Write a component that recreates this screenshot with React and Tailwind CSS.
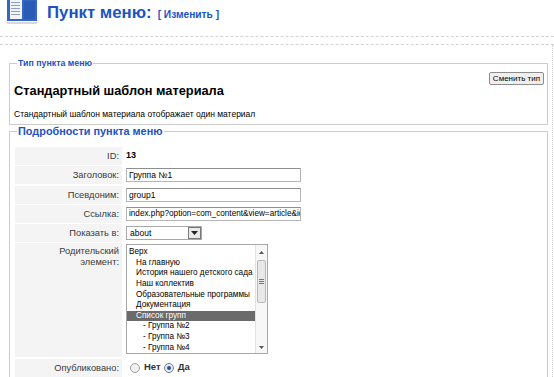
const parents = [
  { t: 'Верх', d: 0 },
  { t: 'На главную', d: 1 },
  { t: 'История нашего детского сада', d: 1 },
  { t: 'Наш коллектив', d: 1 },
  { t: 'Образовательные программы', d: 1 },
  { t: 'Документация', d: 1 },
  { t: 'Список групп', d: 1, sel: true },
  { t: '- Группа №2', d: 2 },
  { t: '- Группа №3', d: 2 },
  { t: '- Группа №4', d: 2 },
];

const Label = ({ children, h = 'h-[18px]' }) => (
  <div className={`w-[107px] ${h} shrink-0 bg-[#f4f4f4] text-right pr-[3px] text-[9.3px] text-[#3a3a3a] leading-[18px]`}>
    {children}
  </div>
);

const Field = ({ value, w = 'w-[175px]', size = 'text-[8.5px]' }) => (
  <div className={`${w} h-[14px] border border-[#b5b5b5] border-t-[#8f8f8f] bg-white px-[2px] leading-[12px] ${size} text-black overflow-hidden whitespace-nowrap`}>
    {value}
  </div>
);

const App = () => {
  return (
    <div className="w-[554px] h-[377px] overflow-hidden bg-white font-['Liberation_Sans',Arial,sans-serif] text-[8.5px] text-black">
      {/* Header */}
      <div className="flex items-start h-[30px]">
        <svg width="32" height="26" viewBox="0 0 32 26" className="ml-[6px] mt-[-1px]">
          <rect x="1" y="0" width="30" height="22" fill="#3468c0" />
          <rect x="4" y="0" width="12" height="20" fill="#f2f4f8" />
          <rect x="5" y="3" width="9" height="1" fill="#8aa0c8" />
          <rect x="5" y="6" width="9" height="1" fill="#8aa0c8" />
          <rect x="5" y="9" width="9" height="1" fill="#8aa0c8" />
          <rect x="5" y="12" width="9" height="1" fill="#8aa0c8" />
          <rect x="5" y="15" width="9" height="1" fill="#8aa0c8" />
          <rect x="18" y="2" width="11" height="18" fill="#2a5bb5" />
          <rect x="1" y="23" width="30" height="2" fill="#d8d8d8" />
        </svg>
        <div className="ml-[9px] flex items-baseline">
          <span className="text-[16.8px] font-bold text-[#1b53c4] leading-[26px]">Пункт меню:</span>
          <span className="ml-[6px] text-[10.2px] font-bold text-[#1b53c4]">[ Изменить ]</span>
        </div>
      </div>
      <div className="mt-[6px] border-t border-dashed border-[#d4d4d4]" />
      <div className="mt-[7px] border-t border-dashed border-[#d4d4d4]" />

      <div className="mr-[1px] border-r border-dotted border-[#cfcfcf] pt-[12px] pb-[4px]">
        {/* Type */}
        <fieldset className="ml-[9px] mr-[4px] border border-[#cccccc] px-[4px] pb-[4px]">
          <legend className="ml-[3px] px-[1px] text-[8.8px] font-bold text-[#1b53c4] leading-[12px]">Тип пункта меню</legend>
          <div className="flex items-start justify-between">
            <div className="pt-[14px] text-[12.8px] font-bold leading-[16px]">Стандартный шаблон материала</div>
            <button className="mt-[3px] mr-[-1px] h-[13px] px-[3px] rounded-[2px] border border-[#8c8c8c] bg-[#efefef] text-[8px] leading-[11px] text-black">
              Сменить тип
            </button>
          </div>
          <div className="mt-[9px] leading-[12px]">Стандартный шаблон материала отображает один материал</div>
        </fieldset>

        {/* Details */}
        <fieldset className="ml-[9px] mr-[4px] border border-[#cccccc] px-[5px] pt-[10px] h-[260px]">
          <legend className="ml-[2px] px-[1px] text-[10.9px] font-bold text-[#1b53c4] leading-[12px]">Подробности пункта меню</legend>
          <div className="flex flex-col gap-[1.25px]">
            <div className="flex items-center gap-[4px]">
              <Label>ID:</Label>
              <span className="font-bold text-[9px]">13</span>
            </div>
            <div className="flex items-center gap-[4px]">
              <Label>Заголовок:</Label>
              <Field value="Группа №1" />
            </div>
            <div className="flex items-center gap-[4px]">
              <Label>Псевдоним:</Label>
              <Field value="group1" />
            </div>
            <div className="flex items-center gap-[4px]">
              <Label>Ссылка:</Label>
              <Field value="index.php?option=com_content&view=article&id=1" size="text-[8.2px]" />
            </div>
            <div className="flex items-center gap-[4px]">
              <Label>Показать в:</Label>
              <div className="w-[76px] h-[14px] flex border border-[#a8a8a8] bg-white">
                <span className="flex-1 pl-[3px] leading-[12px]">about</span>
                <span className="w-[13px] h-[12px] border border-[#7a7a7a] bg-[#e9e9e9] flex items-center justify-center">
                  <svg width="7" height="4" viewBox="0 0 7 4"><path d="M0 0h7L3.5 4z" fill="#222" /></svg>
                </span>
              </div>
            </div>
            <div className="flex items-start gap-[4px]">
              <Label h="h-[114px]">
                <div className="leading-[11px] pt-[3px]">Родительский<br />элемент:</div>
              </Label>
              <div className="mt-[1px] w-[142px] h-[110px] flex border border-[#a8a8a8] bg-white">
                <div className="flex-1 overflow-hidden pt-[2px]">
                  {parents.map((p) => (
                    <div
                      key={p.t}
                      className={`h-[10.6px] leading-[10.6px] text-[8.2px] whitespace-nowrap ${p.d === 0 ? 'pl-[2px]' : p.d === 1 ? 'pl-[9px]' : 'pl-[16px]'} ${p.sel ? 'bg-[#6b6b6b] text-white' : ''}`}
                    >
                      {p.t}
                    </div>
                  ))}
                </div>
                <div className="w-[12px] flex flex-col border-l border-[#e2e2e2] bg-[#f7f7f7]">
                  <div className="h-[15px] flex items-center justify-center">
                    <svg width="5" height="3" viewBox="0 0 5 3"><path d="M0 3h5L2.5 0z" fill="#555" /></svg>
                  </div>
                  <div className="mx-[1px] h-[43px] rounded-[2px] border border-[#b8b8b8] bg-[#e8e8e8] flex items-center justify-center">
                    <div className="flex flex-col gap-[1px]">
                      <div className="w-[5px] h-px bg-[#777]" />
                      <div className="w-[5px] h-px bg-[#777]" />
                      <div className="w-[5px] h-px bg-[#777]" />
                    </div>
                  </div>
                  <div className="flex-1" />
                  <div className="h-[12px] flex items-center justify-center">
                    <svg width="5" height="3" viewBox="0 0 5 3"><path d="M0 0h5L2.5 3z" fill="#555" /></svg>
                  </div>
                </div>
              </div>
            </div>
            <div className="flex items-center gap-[4px]">
              <Label>Опубликовано:</Label>
              <div className="flex items-center ml-[4px]">
                <span className="w-[10px] h-[10px] rounded-full border border-[#a0a0a0] bg-[#f0f0f0]" />
                <span className="ml-[4px] font-bold text-[9.5px] text-[#333]">Нет</span>
                <span className="ml-[3px] w-[10px] h-[10px] rounded-full border border-[#7a7a7a] bg-[#e6eef8] flex items-center justify-center">
                  <span className="w-[4px] h-[4px] rounded-full bg-[#1f4fa8]" />
                </span>
                <span className="ml-[4px] font-bold text-[9.5px] text-[#333]">Да</span>
              </div>
            </div>
          </div>
        </fieldset>
      </div>
    </div>
  );
};

export default App;
